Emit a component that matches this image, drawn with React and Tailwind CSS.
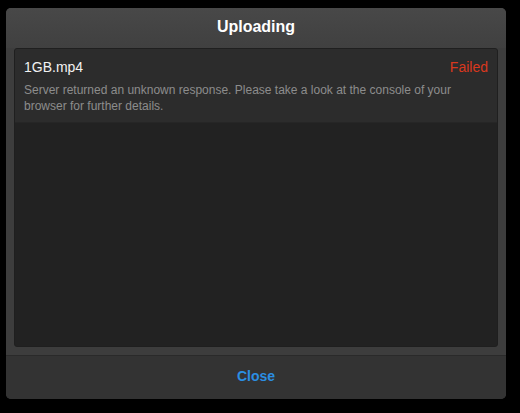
export default function App() {
    const files = [
        {
            name: "1GB.mp4",
            status: "Failed",
            message:
                "Server returned an unknown response. Please take a look at the console of your browser for further details.",
        },
    ];

    return (
        <div className="h-[413px] w-[520px] bg-black pl-[6px] pt-[8px] font-['Liberation_Sans',Arial,sans-serif]">
            <div className="flex h-[391px] w-[500px] flex-col rounded-[5px] bg-[#3d3d3d]">
                <div className="flex h-[40px] items-center justify-center rounded-t-[5px] bg-gradient-to-b from-[#484848] to-[#404040] pb-[2px]">
                    <h2 className="text-[16px] font-bold text-white">Uploading</h2>
                </div>

                <div className="mx-[8px] h-[299px] overflow-hidden rounded-[3px] border border-[#1f1f1f] bg-[#222222]">
                    {files.map((f) => (
                        <div key={f.name} className="border-b border-[#262626] bg-[#2c2c2c] px-[9px] pb-[8px] pt-[9px]">
                            <div className="flex items-center justify-between">
                                <div className="text-[14px] leading-[18px] text-[#f2f2f2]">{f.name}</div>
                                <div className="text-[14px] leading-[18px] text-[#d9381e]">{f.status}</div>
                            </div>
                            <p className="mt-[6px] pr-[30px] text-[12px] leading-[16px] text-[#8c8c8c]">{f.message}</p>
                        </div>
                    ))}
                </div>

                <div className="mt-[8px] flex flex-1 items-center justify-center rounded-b-[5px] border-t border-[#2a2a2a] bg-[#333333] pb-[2px]">
                    <button type="button" className="text-[14px] font-bold text-[#2b8fe3]">
                        Close
                    </button>
                </div>
            </div>
        </div>
    );
}
